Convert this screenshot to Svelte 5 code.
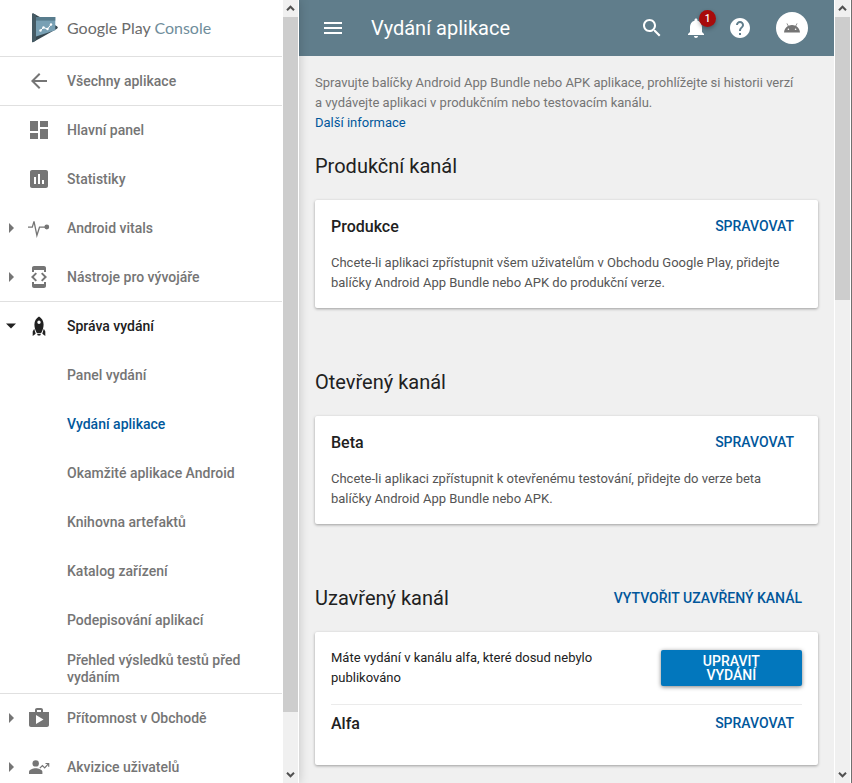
<script>
  const nav = [
    { label: 'Hlavní panel', icon: 'dashboard' },
    { label: 'Statistiky', icon: 'stats' },
    { label: 'Android vitals', icon: 'vitals', caret: true },
    { label: 'Nástroje pro vývojáře', icon: 'dev', caret: true, line: true },
    {
      label: 'Správa vydání',
      icon: 'rocket',
      caret: true,
      open: true,
      line: true,
      children: [
        'Panel vydání',
        'Vydání aplikace',
        'Okamžité aplikace Android',
        'Knihovna artefaktů',
        'Katalog zařízení',
        'Podepisování aplikací',
        'Přehled výsledků testů před vydáním'
      ]
    },
    { label: 'Přítomnost v Obchodě', icon: 'shop', caret: true },
    { label: 'Akvizice uživatelů', icon: 'users', caret: true }
  ];
  const current = 'Vydání aplikace';

  const tracks = [
    {
      heading: 'Produkční kanál',
      name: 'Produkce',
      text: 'Chcete-li aplikaci zpřístupnit všem uživatelům v Obchodu Google Play, přidejte balíčky Android App Bundle nebo APK do produkční verze.'
    },
    {
      heading: 'Otevřený kanál',
      name: 'Beta',
      text: 'Chcete-li aplikaci zpřístupnit k otevřenému testování, přidejte do verze beta balíčky Android App Bundle nebo APK.'
    }
  ];
</script>

{#snippet scrollbar(size)}
  <div class="scrollbar">
    <button class="arrow" aria-label="Nahoru" tabindex="-1">
      <svg width="9" height="9" viewBox="0 0 9 9"><path d="M1 6.2 4.5 2.7 8 6.2" /></svg>
    </button>
    <div class="track"><div class="thumb" style="height: {size}%"></div></div>
    <button class="arrow" aria-label="Dolů" tabindex="-1">
      <svg width="9" height="9" viewBox="0 0 9 9"><path d="M1 2.8 4.5 6.3 8 2.8" /></svg>
    </button>
  </div>
{/snippet}

{#snippet glyph(name)}
  <svg class="icon" viewBox="0 0 24 24" aria-hidden="true">
    {#if name === 'dashboard'}
      <path d="M3 13h8V3H3v10zm0 8h8v-6H3v6zm10 0h8V11h-8v10zm0-18v6h8V3h-8z" />
    {:else if name === 'stats'}
      <path d="M19 3H5c-1.1 0-2 .9-2 2v14c0 1.1.9 2 2 2h14c1.1 0 2-.9 2-2V5c0-1.1-.9-2-2-2zM9 17H7v-7h2v7zm4 0h-2V7h2v10zm4 0h-2v-4h2v4z" />
    {:else if name === 'vitals'}
      <path d="M1 11.2h4.3L7 5.4l2.9 14 2.6-8.2h7" fill="none" stroke="currentColor" stroke-width="1.3" />
      <circle cx="19.8" cy="11" r="2.4" />
    {:else if name === 'dev'}
      <path d="M7 5h10v2h2V3c0-1.1-.9-1.99-2-1.99L7 1c-1.1 0-2 .9-2 2v4h2V5zm8.41 11.59L20 12l-4.59-4.59L14 8.83 17.17 12 14 15.17l1.41 1.42zM10 15.17L6.83 12 10 8.83 8.59 7.41 4 12l4.59 4.59L10 15.17zM17 19H7v-2H5v4c0 1.1.9 2 2 2h10c1.1 0 2-.9 2-2v-4h-2v2z" />
    {:else if name === 'rocket'}
      <path fill-rule="evenodd" d="M12 2.4c2.800 1.600 4.600 4.600 4.600 8 0 3-1 6-2.400 8.600H9.800C8.400 16.400 7.400 13.400 7.400 10.400c0-3.400 1.800-6.400 4.600-8zm0 4.200a1.700 1.700 0 1 0 0 3.400 1.700 1.700 0 0 0 0-3.400z" />
      <path d="M7.200 14.800 5.700 17.400V22l3-2.300zM16.800 14.800l1.500 2.600V22l-3-2.300zM10 19.800h4l-.8 1.800h-2.400z" />
    {:else if name === 'shop'}
      <path d="M16 6V4c0-1.110-.89-2-2-2h-4c-1.110 0-2 .89-2 2v2H2v13c0 1.110.89 2 2 2h16c1.110 0 2-.89 2-2V6h-6zm-6-2h4v2h-4V4zM9 18V9l7.500 4.500L9 18z" />
    {:else if name === 'users'}
      <circle cx="8.700" cy="8.400" r="3.200" />
      <path d="M2 19v-2.200c0-2.400 4.200-3.600 6.700-3.600s6.700 1.200 6.700 3.600V19z" />
      <path d="m12.800 13.200 2.600-2.600 2.300 2.300 3.600-4M18.500 8.500h3.200v3.200" fill="none" stroke="currentColor" stroke-width="1.200" />
    {/if}
  </svg>
{/snippet}

<div class="shell">
  <aside>
    <div class="side">
      <a class="brand" href="#home">
        <svg width="28" height="30" viewBox="0 0 28 30" aria-hidden="true">
          <path d="M1 1.500Q1 0 2.400.6L26 13.200q1.800 1.300 0 2.600L2.400 29.100Q1 29.600 1 28z" fill="#37474f" />
          <path d="M1 1.500Q1 0 2.400.6L5 2v25.600l-2.600 1.500Q1 29.600 1 28z" fill="#455a64" />
          <path d="M5 4h19.300v13.300L5 23.500z" fill="#78a0b4" />
          <path d="M5 4h19.300v3.600H5z" fill="#587c8d" />
          <path d="m9.500 17.500 3-3 4 1.500 3.500-4.500" fill="none" stroke="#fff" />
          <circle cx="9.500" cy="17.500" r="1.200" fill="#fff" /><circle cx="12.500" cy="14.500" r="1.200" fill="#fff" />
          <circle cx="16.500" cy="16" r="1.200" fill="#fff" /><circle cx="20" cy="11.500" r="1.200" fill="#fff" />
        </svg>
        <span class="word">Google Play <span>Console</span></span>
      </a>
      <a class="row line" href="#apps">
        <span class="caret"></span>
        <svg class="icon" viewBox="0 0 24 24" aria-hidden="true"><path d="M20 11H7.830l5.590-5.590L12 4l-8 8 8 8 1.410-1.410L7.830 13H20v-2z" /></svg>
        <span>Všechny aplikace</span>
      </a>
      <nav>
        {#each nav as item}
          <a class="row" class:open={item.open} class:line={item.line && !item.children} href="#{item.icon}">
            <span class="caret">
              {#if item.open}
                <svg width="12" height="12" viewBox="0 0 12 12"><path d="M1 3.500h10L6 8.500z" /></svg>
              {:else if item.caret}
                <svg width="12" height="12" viewBox="0 0 12 12"><path d="M4 1v10l5-5z" /></svg>
              {/if}
            </span>
            {@render glyph(item.icon)}
            <span>{item.label}</span>
          </a>
          {#if item.children}
            <div class="children">
              {#each item.children as child}
                <a class="row sub" class:current={child === current} href="#{child}">{child}</a>
              {/each}
            </div>
          {/if}
        {/each}
      </nav>
    </div>
    {@render scrollbar(92.8)}
  </aside>

  <div class="main">
    <div class="page">
      <header>
        <button aria-label="Nabídka"><svg class="icon" viewBox="0 0 24 24"><path d="M3 18h18v-2H3v2zm0-5h18v-2H3v2zm0-7v2h18V6H3z" /></svg></button>
        <h1>Vydání aplikace</h1>
        <div class="tools">
          <button aria-label="Hledat"><svg class="icon" viewBox="0 0 24 24"><path d="M15.500 14h-.79l-.28-.27C15.410 12.590 16 11.110 16 9.500 16 5.910 13.090 3 9.500 3S3 5.910 3 9.500 5.910 16 9.500 16c1.610 0 3.090-.59 4.230-1.570l.27.28v.79l5 4.990L20.490 19l-4.990-5zm-6 0C7.010 14 5 11.990 5 9.500S7.010 5 9.500 5 14 7.010 14 9.500 11.990 14 9.500 14z" /></svg></button>
          <button class="bell" aria-label="Oznámení"><svg class="icon" viewBox="0 0 24 24"><path d="M12 22c1.100 0 2-.9 2-2h-4c0 1.100.89 2 2 2zm6-6v-5c0-3.070-1.640-5.640-4.500-6.320V4c0-.83-.67-1.500-1.500-1.500s-1.500.67-1.500 1.500v.68C7.630 5.360 6 7.920 6 11v5l-2 2v1h16v-1l-2-2z" /></svg><span class="badge">1</span></button>
          <button aria-label="Nápověda"><svg class="icon" viewBox="0 0 24 24"><path d="M12 2C6.480 2 2 6.480 2 12s4.480 10 10 10 10-4.480 10-10S17.520 2 12 2zm1 17h-2v-2h2v2zm2.070-7.750l-.9.92C13.450 12.900 13 13.500 13 15h-2v-.5c0-1.100.45-2.100 1.170-2.830l1.240-1.260c.37-.36.59-.86.59-1.410 0-1.100-.9-2-2-2s-2 .9-2 2H8c0-2.210 1.790-4 4-4s4 1.790 4 4c0 .88-.36 1.680-.93 2.250z" /></svg></button>
          <button class="avatar" aria-label="Účet"><svg width="16" height="10" viewBox="0 0 16 10"><path fill-rule="evenodd" d="M0 9.500C.2 6.700 1.600 4.300 3.900 3L2.500.6l.6-.4 1.500 2.500a8.500 8.500 0 0 1 6.800 0L12.900.2l.6.4L12.100 3c2.300 1.300 3.700 3.700 3.900 6.500zM4.400 5.400a.8.8 0 1 0 0 1.600.8.8 0 0 0 0-1.600zm7.200 0a.8.8 0 1 0 0 1.600.8.8 0 0 0 0-1.600z" /></svg></button>
        </div>
      </header>

      <main>
        <p class="intro">
          Spravujte balíčky Android App Bundle nebo APK aplikace, prohlížejte si historii verzí a&nbsp;vydávejte aplikaci v produkčním nebo testovacím kanálu.<br />
          <a href="#more">Další informace</a>
        </p>

        {#each tracks as track}
          <section>
            <div class="head"><h2>{track.heading}</h2></div>
            <article>
              <div class="title"><h3>{track.name}</h3><button class="flat">SPRAVOVAT</button></div>
              <p>{track.text}</p>
            </article>
          </section>
        {/each}

        <section>
          <div class="head"><h2>Uzavřený kanál</h2><button class="flat">VYTVOŘIT UZAVŘENÝ KANÁL</button></div>
          <article class="closed">
            <div class="notice">
              <p>Máte vydání v kanálu alfa, které dosud nebylo publikováno</p>
              <button class="raised">UPRAVIT VYDÁNÍ</button>
            </div>
            <div class="title"><h3>Alfa</h3><button class="flat">SPRAVOVAT</button></div>
          </article>
        </section>
      </main>
    </div>
    {@render scrollbar(37.8)}
  </div>
</div>

<style>
  .shell {
    display: flex;
    height: 100vh;
    overflow: hidden;
    font-family: Roboto, 'Noto Sans', sans-serif;
    color: #212121;
    background: #f0f0f0;
  }
  h1, h2, h3, p { margin: 0; }
  a { text-decoration: none; color: #01579b; }
  button {
    margin: 0;
    padding: 0;
    border: 0;
    background: none;
    font: inherit;
    color: inherit;
    cursor: pointer;
  }
  svg { display: block; fill: currentColor; }
  .icon { width: 24px; height: 24px; flex: none; }

  aside {
    display: flex;
    flex: 0 0 299px;
    z-index: 1;
    background: #fff;
    box-shadow: 0 0 10px rgba(0, 0, 0, 0.2);
  }
  .side { flex: 1; min-width: 0; overflow: hidden; }
  .brand {
    display: flex;
    align-items: center;
    gap: 8px;
    height: 56px;
    padding-left: 31px;
    border-bottom: 1px solid #e0e0e0;
  }
  .word { font-family: Lato, sans-serif; font-size: 16px; line-height: 24px; color: #6b6b6b; }
  .word span { color: #6f8d9b; }
  .row {
    display: flex;
    align-items: center;
    box-sizing: border-box;
    height: 49px;
    padding: 0 16px 0 5px;
    border-bottom: 1px solid transparent;
    font-size: 14px;
    font-weight: 500;
    line-height: 17px;
    color: #757575;
  }
  .row .icon { margin: 0 16px 0 10px; }
  .caret { width: 12px; }
  .line, .sub:last-child { border-bottom-color: #e0e0e0; }
  .open { color: #212121; }
  .sub { padding: 0 16px 0 67px; }
  .current { color: #01579b; }

  .scrollbar {
    display: flex;
    flex: 0 0 15px;
    flex-direction: column;
    border: solid #fff;
    border-width: 0 1px;
    background: #f0f0f0;
  }
  .arrow { display: grid; place-items: center; height: 17px; }
  .arrow svg { fill: none; stroke: #505050; stroke-width: 2; }
  .track { flex: 1; }
  .thumb { background: #cdcdcd; }

  .main { display: flex; flex: 1; min-width: 0; border-right: 1px solid #707070; }
  .page { flex: 1; min-width: 0; overflow: hidden; }
  header {
    display: flex;
    align-items: center;
    height: 56px;
    padding: 0 26px 0 22px;
    background: #607d8b;
    color: #fff;
  }
  h1 { padding-left: 26px; font-size: 20px; font-weight: 400; line-height: 24px; }
  .tools { display: flex; align-items: center; gap: 20px; margin-left: auto; }
  .bell { position: relative; }
  .badge {
    position: absolute;
    top: -6px;
    right: -8px;
    width: 17px;
    height: 17px;
    border-radius: 50%;
    background: #a80b0b;
    box-shadow: 0 2px 4px rgba(0, 0, 0, 0.3);
    font-size: 10px;
    font-weight: 500;
    line-height: 18px;
    text-align: center;
  }
  .avatar {
    display: grid;
    place-items: center;
    width: 32px;
    height: 32px;
    margin-left: 4px;
    border-radius: 50%;
    background: #fff;
    color: #757575;
  }

  main { padding: 17px 16px; font-size: 13px; line-height: 20px; }
  .intro { margin-bottom: 15px; color: #757575; }
  section { margin-bottom: 56px; }
  .head {
    display: flex;
    align-items: center;
    justify-content: space-between;
    height: 36px;
    margin-bottom: 16px;
    padding-right: 8px;
  }
  h2 { font-size: 20px; font-weight: 400; line-height: 24px; }
  article {
    padding: 16px 16px 15px;
    border-radius: 2px;
    background: #fff;
    box-shadow: 0 1px 3px rgba(0, 0, 0, 0.35);
    color: #545454;
  }
  .title { display: flex; align-items: flex-start; justify-content: space-between; }
  .title + p { margin-top: 15px; }
  h3 { font-size: 16px; font-weight: 500; line-height: 22px; color: #212121; }
  .flat { padding: 0 8px; font-size: 14px; font-weight: 500; line-height: 20px; color: #01579b; }
  .closed { padding-bottom: 30px; color: #212121; }
  .notice {
    display: flex;
    align-items: center;
    gap: 16px;
    margin-bottom: 8px;
    padding-bottom: 16px;
    border-bottom: 1px solid #ebebeb;
  }
  .notice p { flex: 1; }
  .raised {
    flex: 0 0 30%;
    box-sizing: border-box;
    height: 36px;
    padding: 0 24px;
    border-radius: 2px;
    background: #0277bd;
    box-shadow: 0 1px 4px rgba(0, 0, 0, 0.5);
    color: #fff;
    font-size: 14px;
    font-weight: 500;
    line-height: 14px;
  }
</style>
